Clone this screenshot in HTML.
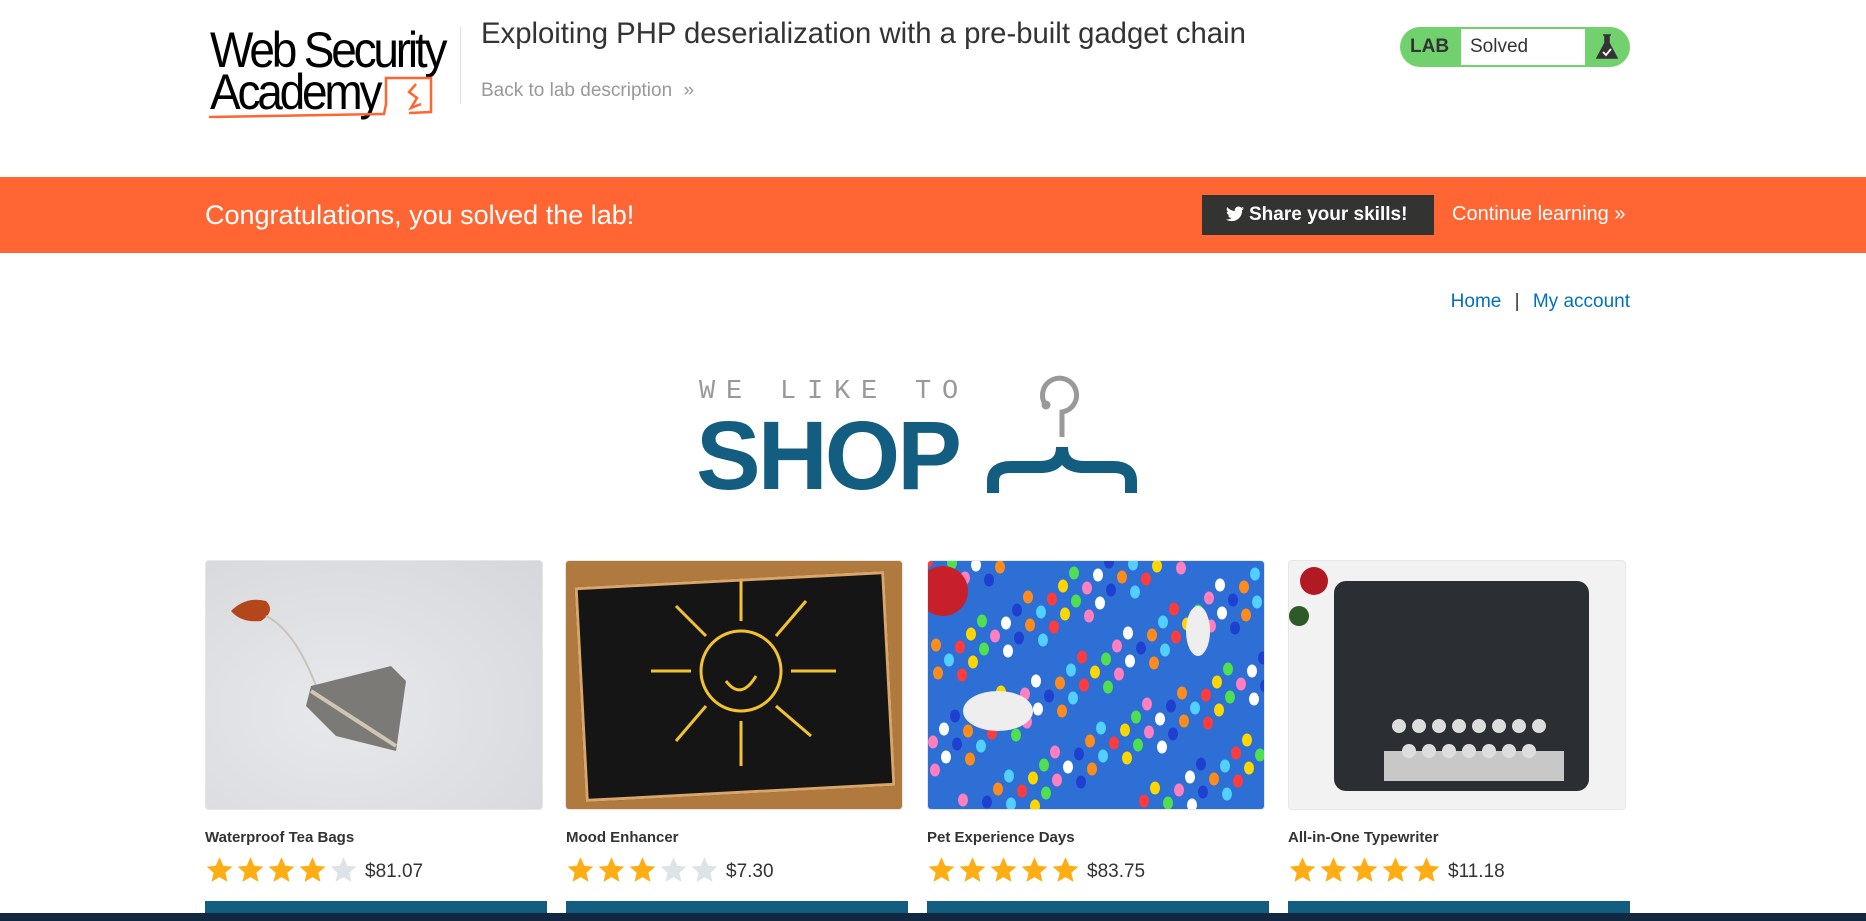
<!DOCTYPE html>
<html><head><meta charset="utf-8">
<style>
*{margin:0;padding:0;box-sizing:border-box}
html,body{width:1866px;height:921px;overflow:hidden;background:#fff;font-family:"Liberation Sans",Arial,sans-serif}
.abs{position:absolute}
.card{position:absolute;top:560px;width:338px;height:250px;border-radius:4px;overflow:hidden;border:1px solid #e6e6e6}
.name{position:absolute;top:829px;font-size:15px;font-weight:bold;color:#333}
.rate{position:absolute;top:855px;display:flex;align-items:center}
.rate svg{width:29px;height:27px;margin-right:2px}
.price{font-size:19px;color:#333;margin-left:5px;margin-top:6px}
.btn{position:absolute;top:901px;height:20px;width:342px;background:#135d80}
.lg{position:absolute;left:3px;font-size:46px;letter-spacing:-3.2px;color:#000;line-height:40px;transform:scaleY(1.08);transform-origin:left top}
</style></head><body>

<!-- logo -->
<div class="abs" style="left:207px;top:26px;width:260px;height:95px">
  <div class="lg" style="top:2px">Web Security</div>
  <div class="lg" style="top:44px">Academy</div>
  <svg class="abs" style="left:0;top:30px" width="230" height="70" viewBox="0 0 230 70">
    <path d="M2 61 L177 58 L179 48 L179 22 L224 22 L224 56 L202 57" fill="none" stroke="#ff6633" stroke-width="2.5"/>
    <path d="M209 28 L202 36 L210 42 L204 52 L214 48" fill="none" stroke="#ff6633" stroke-width="2.5"/>
  </svg>
</div>
<div class="abs" style="left:460px;top:26px;width:1px;height:78px;background:#e0e0e0"></div>
<div class="abs" style="left:481px;top:17px;font-size:29.3px;color:#333">Exploiting PHP deserialization with a pre-built gadget chain</div>
<div class="abs" style="left:481px;top:80px;font-size:19px;color:#999">Back to lab description <span style="margin-left:6px">»</span></div>

<!-- badge -->
<div class="abs" style="left:1400px;top:27px;width:230px;height:40px;border-radius:20px;background:#70d16d;overflow:hidden">
  <div class="abs" style="left:10px;top:9px;font-size:19px;font-weight:bold;color:#333">LAB</div>
  <div class="abs" style="left:61px;top:2px;width:124px;height:36px;background:#fff"></div>
  <div class="abs" style="left:70px;top:9px;font-size:19px;color:#333">Solved</div>
  <svg class="abs" style="left:195px;top:6px" width="24" height="28" viewBox="0 0 24 28">
    <path d="M8 2 H16 M10 2 V10 L2 25 H22 L14 10 V2" fill="#333" stroke="#333" stroke-width="1.5"/>
    <path d="M8 19 L11 22 L16 16" fill="none" stroke="#fff" stroke-width="1.8"/>
  </svg>
</div>

<!-- banner -->
<div class="abs" style="left:0;top:177px;width:1866px;height:76px;background:#ff6633"></div>
<div class="abs" style="left:205px;top:200px;font-size:27px;color:#fff">Congratulations, you solved the lab!</div>
<div class="abs" style="left:1202px;top:195px;width:232px;height:40px;background:#333332"></div>
<svg class="abs" style="left:1226px;top:206px" width="18" height="16" viewBox="0 0 24 20"><path d="M24 2.4c-.9.4-1.8.6-2.8.8 1-.6 1.8-1.6 2.2-2.7-1 .6-2 1-3.1 1.2C19.3.7 18 0 16.6 0c-2.7 0-4.9 2.2-4.9 4.9 0 .4 0 .8.1 1.1C7.7 5.8 4.1 3.9 1.7.9c-.4.7-.7 1.6-.7 2.5 0 1.7.9 3.2 2.2 4.1-.8 0-1.6-.2-2.2-.6v.1c0 2.4 1.700 4.4 3.9 4.8-.4.1-.8.2-1.3.2-.3 0-.6 0-.9-.1.6 2 2.4 3.4 4.6 3.4-1.7 1.3-3.8 2.1-6.1 2.1-.4 0-.8 0-1.2-.1 2.2 1.4 4.8 2.2 7.5 2.2 9.1 0 14-7.5 14-14v-.6c1-.7 1.8-1.6 2.5-2.5z" fill="#fff"/></svg>
<div class="abs" style="left:1249px;top:204px;font-size:19px;font-weight:bold;color:#fff">Share your skills!</div>
<div class="abs" style="left:1452px;top:203px;font-size:20px;color:#fff">Continue learning <span>»</span></div>

<!-- nav -->
<div class="abs" style="left:1444px;top:291px;font-size:19px;color:#0071bc;width:186px;text-align:right;white-space:nowrap">Home <span style="color:#333;margin:0 8px">|</span> My account</div>

<!-- logo shop -->
<div class="abs" style="left:699px;top:377px;font-family:'Liberation Mono',monospace;font-size:27px;letter-spacing:10.8px;color:#999">WE LIKE TO</div>
<div class="abs" style="left:696px;top:404px;font-size:97px;font-weight:bold;color:#135d80;letter-spacing:-3px;line-height:104px">SHOP</div>
<svg class="abs" style="left:985px;top:375px" width="155" height="120" viewBox="0 0 155 120">
  <path d="M60 29 A17 17 0 1 1 77 37 V62" fill="none" stroke="#999" stroke-width="5"/>
  <circle cx="61" cy="30" r="4.5" fill="#999"/>
  <path d="M8 118 V106 Q8 92 26 92 H55 Q77 92 77 72 Q77 92 99 92 H128 Q146 92 146 106 V118" fill="none" stroke="#135d80" stroke-width="12"/>
</svg>

<!-- cards -->
<div class="card" style="left:205px;background:radial-gradient(ellipse at 40% 60%,#e8e9ec,#d5d7db)">
  <svg width="338" height="250"><path d="M25 50 Q40 35 60 40 Q70 50 55 60 Q35 62 25 50Z" fill="#b4461c"/><path d="M60 55 Q90 70 112 130" stroke="#c9c4b8" fill="none" stroke-width="2"/><path d="M105 125 L185 105 L200 120 L190 190 L130 175 L100 145Z" fill="#7c7a76"/><path d="M105 130 L190 185" stroke="#cfc7b4" stroke-width="4"/></svg>
</div>
<div class="card" style="left:565px;background:#b07a3e">
  <div class="abs" style="left:14px;top:18px;width:310px;height:215px;background:#151515;transform:rotate(-3deg);border:3px solid #d9a56a"></div>
  <svg class="abs" style="left:0;top:0" width="338" height="250"><circle cx="175" cy="110" r="40" fill="none" stroke="#f2c230" stroke-width="3"/><g stroke="#f2c230" stroke-width="3"><path d="M175 60 V20 M175 160 V205 M125 110 H85 M225 110 H270 M140 75 L110 45 M210 75 L240 40 M140 145 L110 180 M210 145 L245 175"/></g><path d="M160 120 Q175 140 190 115" fill="none" stroke="#f2c230" stroke-width="3"/></svg>
</div>
<div class="card" style="left:927px;background:#2e6fd6">
  <svg width="338" height="250" id="b"></svg>
</div>
<div class="card" style="left:1288px;background:#f2f2f2">
  <svg width="338" height="250"><circle cx="25" cy="20" r="14" fill="#b11a22"/><circle cx="10" cy="55" r="10" fill="#2d5a26"/><rect x="45" y="20" width="255" height="210" rx="12" fill="#2b2e33"/><rect x="95" y="190" width="180" height="30" fill="#c8c8c8"/><g fill="#ddd"><circle cx="110" cy="165" r="7"/><circle cx="130" cy="165" r="7"/><circle cx="150" cy="165" r="7"/><circle cx="170" cy="165" r="7"/><circle cx="190" cy="165" r="7"/><circle cx="210" cy="165" r="7"/><circle cx="230" cy="165" r="7"/><circle cx="250" cy="165" r="7"/><circle cx="120" cy="190" r="7"/><circle cx="140" cy="190" r="7"/><circle cx="160" cy="190" r="7"/><circle cx="180" cy="190" r="7"/><circle cx="200" cy="190" r="7"/><circle cx="220" cy="190" r="7"/><circle cx="240" cy="190" r="7"/></g></svg>
</div>

<div class="name" style="left:205px">Waterproof Tea Bags</div>
<div class="name" style="left:566px">Mood Enhancer</div>
<div class="name" style="left:927px">Pet Experience Days</div>
<div class="name" style="left:1288px">All-in-One Typewriter</div>

<svg width="0" height="0" style="position:absolute"><defs><path id="s" d="M12 1 L15.2 8.3 L23 9 L17 14.3 L18.8 22 L12 18 L5.2 22 L7 14.3 L1 9 L8.8 8.3Z"/></defs></svg>
<div class="rate" style="left:205px"><svg viewBox="0 0 24 23"><use href="#s" fill="#ffad14"/></svg><svg viewBox="0 0 24 23"><use href="#s" fill="#ffad14"/></svg><svg viewBox="0 0 24 23"><use href="#s" fill="#ffad14"/></svg><svg viewBox="0 0 24 23"><use href="#s" fill="#ffad14"/></svg><svg viewBox="0 0 24 23"><use href="#s" fill="#dde3e6"/></svg><span class="price">$81.07</span></div>
<div class="rate" style="left:566px"><svg viewBox="0 0 24 23"><use href="#s" fill="#ffad14"/></svg><svg viewBox="0 0 24 23"><use href="#s" fill="#ffad14"/></svg><svg viewBox="0 0 24 23"><use href="#s" fill="#ffad14"/></svg><svg viewBox="0 0 24 23"><use href="#s" fill="#dde3e6"/></svg><svg viewBox="0 0 24 23"><use href="#s" fill="#dde3e6"/></svg><span class="price">$7.30</span></div>
<div class="rate" style="left:927px"><svg viewBox="0 0 24 23"><use href="#s" fill="#ffad14"/></svg><svg viewBox="0 0 24 23"><use href="#s" fill="#ffad14"/></svg><svg viewBox="0 0 24 23"><use href="#s" fill="#ffad14"/></svg><svg viewBox="0 0 24 23"><use href="#s" fill="#ffad14"/></svg><svg viewBox="0 0 24 23"><use href="#s" fill="#ffad14"/></svg><span class="price">$83.75</span></div>
<div class="rate" style="left:1288px"><svg viewBox="0 0 24 23"><use href="#s" fill="#ffad14"/></svg><svg viewBox="0 0 24 23"><use href="#s" fill="#ffad14"/></svg><svg viewBox="0 0 24 23"><use href="#s" fill="#ffad14"/></svg><svg viewBox="0 0 24 23"><use href="#s" fill="#ffad14"/></svg><svg viewBox="0 0 24 23"><use href="#s" fill="#ffad14"/></svg><span class="price">$11.18</span></div>

<div class="btn" style="left:205px"></div>
<div class="btn" style="left:566px"></div>
<div class="btn" style="left:927px"></div>
<div class="btn" style="left:1288px"></div>
<div class="abs" style="left:0;top:913px;width:1866px;height:8px;background:#112840"></div>

<script>
var b=document.getElementById('b'),c=['#ff3b3b','#ffd700','#4fe04f','#ff7fbf','#ffffff','#1f3fd0','#ff8c1a','#52d0ff'],h='';
for(var i=0;i<160;i++){var x=(i*73)%338,y=(i*131)%250;h+='<ellipse cx="'+x+'" cy="'+y+'" rx="5" ry="6.5" fill="'+c[i%8]+'"/>';}
h+='<ellipse cx="70" cy="150" rx="35" ry="20" fill="#eee"/><ellipse cx="270" cy="70" rx="12" ry="25" fill="#eee"/><circle cx="15" cy="30" r="25" fill="#c8202a"/>';
b.innerHTML=h;
</script>
</body></html>
